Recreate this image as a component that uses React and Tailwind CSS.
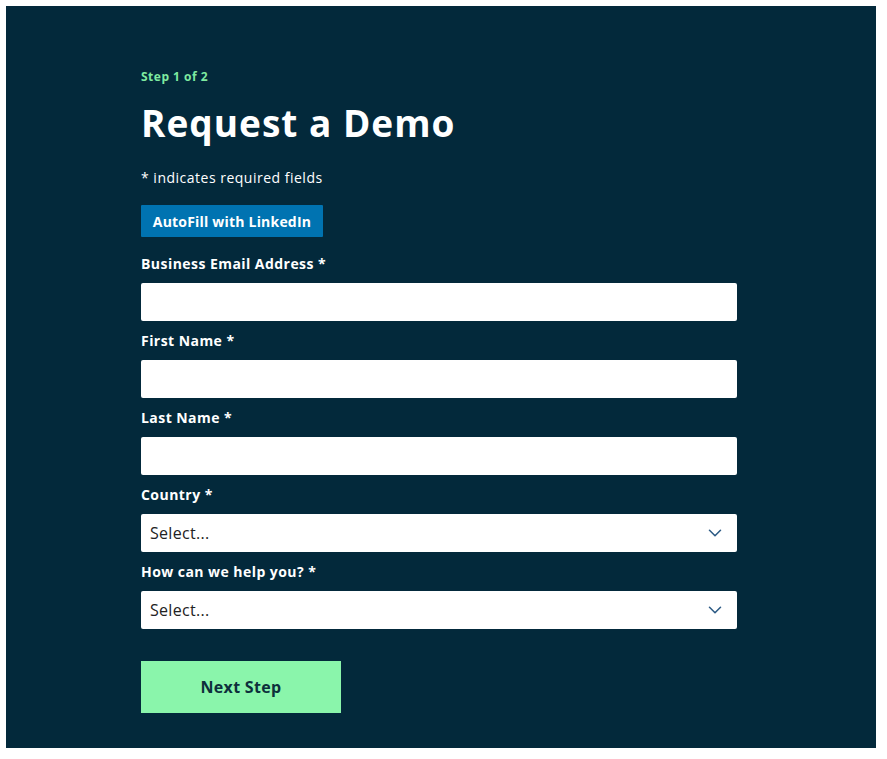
import { ChevronDown } from 'lucide-react';

const font = { fontFamily: '"Open Sans", "Liberation Sans", sans-serif' };

function Field({ label, select }) {
  return (
    <div className="flex flex-col">
      <label className="text-[14px] leading-[18px] font-bold text-white tracking-[0.45px] mb-[10px]">{label}</label>
      <div className="h-[38px] w-[596px] bg-white rounded-[2px] flex items-center justify-between pl-[9px] pr-[11px]">
        {select && (
          <>
            <span className="text-[16px] text-[#222] tracking-[0.3px]">Select...</span>
            <ChevronDown size={22} strokeWidth={1.7} className="text-[#2d5b85]" />
          </>
        )}
      </div>
    </div>
  );
}

export default function App() {
  return (
    <div className="min-h-screen bg-white pt-[6px] pl-[6px]" style={font}>
      <div className="w-[870px] h-[742px] bg-[#03293b] pl-[135px] pt-[63px]">
        <p className="text-[12px] leading-[16px] font-bold text-[#7eeaa0] tracking-[0.5px]">Step 1 of 2</p>
        <h1 className="text-[37px] leading-[44px] font-bold text-white mt-[16px] tracking-[1px]">Request a Demo</h1>
        <p className="text-[14px] leading-[18px] text-white mt-[24px] tracking-[0.5px]">* indicates required fields</p>
        <button className="mt-[18px] h-[32px] w-[182px] bg-[#0073b1] text-white text-[14px] font-bold rounded-[1px] tracking-[0.2px]">
          AutoFill with LinkedIn
        </button>
        <div className="mt-[18px] flex flex-col gap-[11px]">
          <Field label="Business Email Address *" />
          <Field label="First Name *" />
          <Field label="Last Name *" />
          <Field label="Country *" select />
          <Field label="How can we help you? *" select />
        </div>
        <button className="mt-[32px] h-[52px] w-[200px] bg-[#8af5ab] text-[#0d2f3c] text-[16px] font-bold tracking-[0.3px]">
          Next Step
        </button>
      </div>
    </div>
  );
}
